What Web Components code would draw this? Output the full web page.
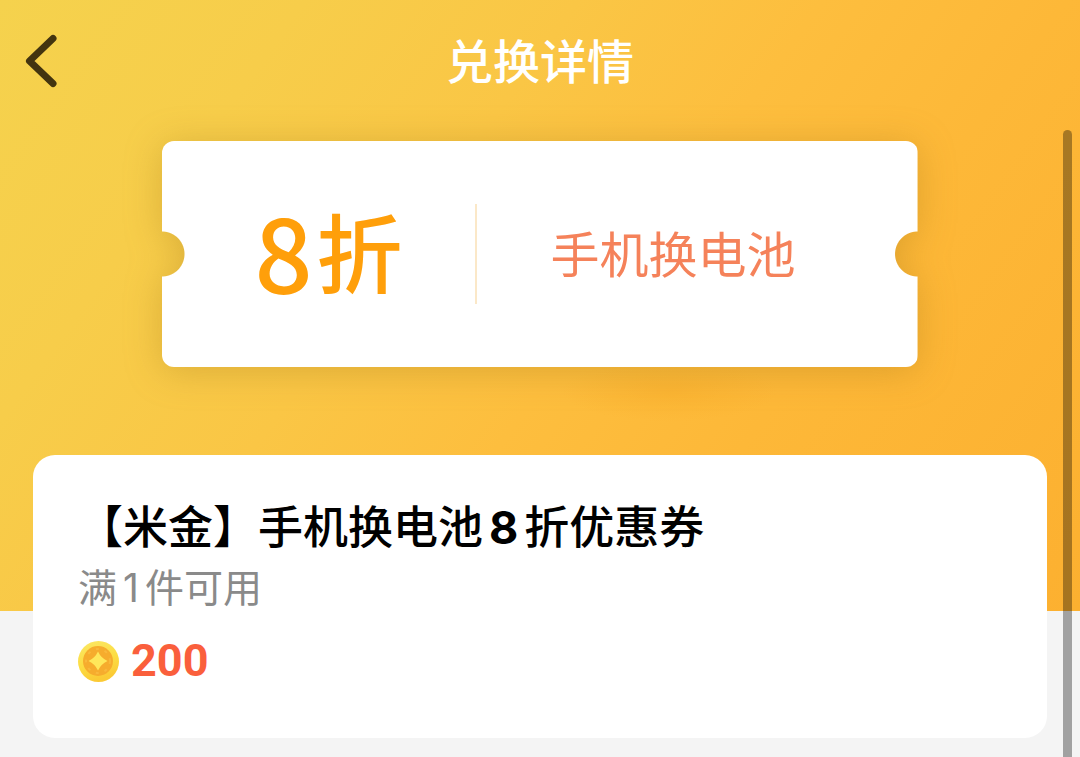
<!DOCTYPE html>
<html lang="zh-CN">
<head>
<meta charset="UTF-8">
<meta name="viewport" content="width=device-width, initial-scale=1">
<title>兑换详情</title>
<style>
    body {
        margin: 0;
        background: #f4f4f4;
        font-family: "Noto Sans CJK SC", sans-serif;
    }
</style>
</head>
<body>
<exchange-page>
    <page-header slot="header">兑换详情</page-header>
    <coupon-ticket slot="ticket" amount="8" unit="折">手机换电池</coupon-ticket>
    <coupon-info price="200">
        <span slot="title">【米金】手机换电池<b>8</b>折优惠券</span>
        <span slot="rule">满<b>1</b>件可用</span>
    </coupon-info>
</exchange-page>

<script>
class ExchangePage extends HTMLElement {
    constructor() {
        super();
        this.attachShadow({ mode: 'open' });
    }

    connectedCallback() {
        this.shadowRoot.innerHTML = `
            <style>
                :host {
                    display: block;
                    position: relative;
                    min-height: 100vh;
                }
                .hero {
                    padding-bottom: 244px;
                    background:
                        radial-gradient(ellipse 10% 5% at 62% 64%, rgba(248, 172, 40, 0.45), transparent),
                        linear-gradient(126deg, #f5d24d 0%, #f7cd4a 20%, #fac645 38%, #fdbe3e 54%, #fdb838 70%, #fcb030 100%);
                }
                main {
                    margin: -156px 33px 0;
                    padding-bottom: 19px;
                }
                .scrollbar {
                    position: absolute;
                    top: 130px;
                    right: 8px;
                    bottom: 0;
                    width: 9px;
                    border-radius: 5px 5px 0 0;
                    background: rgba(0, 0, 0, 0.34);
                }
            </style>
            <div class="hero">
                <slot name="header"></slot>
                <slot name="ticket"></slot>
            </div>
            <main><slot></slot></main>
            <div class="scrollbar"></div>
        `;
    }
}

class PageHeader extends HTMLElement {
    constructor() {
        super();
        this.attachShadow({ mode: 'open' });
    }

    connectedCallback() {
        this.shadowRoot.innerHTML = `
            <style>
                :host {
                    display: block;
                }
                header {
                    display: grid;
                    grid-template-columns: 1fr auto 1fr;
                    align-items: center;
                    height: 122px;
                    padding: 0 20px;
                }
                button {
                    display: flex;
                    justify-self: start;
                    padding: 0;
                    border: 0;
                    background: none;
                    cursor: pointer;
                }
                h1 {
                    margin: 0;
                    padding-bottom: 4px;
                    color: #fff;
                    font-size: 47px;
                    font-weight: 500;
                    line-height: 60px;
                }
            </style>
            <header>
                <button type="button" aria-label="返回">
                    <svg width="44" height="60" viewBox="0 0 44 60" fill="none" stroke="#43340f" stroke-width="7" stroke-linecap="round" stroke-linejoin="round">
                        <path d="M33 7.500L9.500 30L33 52.500"/>
                    </svg>
                </button>
                <h1><slot></slot></h1>
            </header>
        `;
    }
}

class CouponTicket extends HTMLElement {
    constructor() {
        super();
        this.attachShadow({ mode: 'open' });
    }

    connectedCallback() {
        this.shadowRoot.innerHTML = `
            <style>
                :host {
                    display: block;
                    width: 70%;
                    margin: 19px auto 0;
                    filter: drop-shadow(0 4px 18px rgba(150, 110, 20, 0.3));
                }
                /* half circles cut out of both sides */
                .ticket {
                    display: grid;
                    grid-template-columns: 5fr 7fr;
                    align-items: center;
                    height: 226px;
                    border-radius: 12px;
                    background:
                        radial-gradient(circle at 0 50%, transparent 22px, #fff 23px) left / 51% 100% no-repeat,
                        radial-gradient(circle at 100% 50%, transparent 22px, #fff 23px) right / 51% 100% no-repeat;
                }
                .amount {
                    display: flex;
                    box-sizing: border-box;
                    align-items: center;
                    justify-content: center;
                    gap: 4px;
                    height: 100px;
                    padding-bottom: 8px;
                    padding-left: 20px;
                    border-right: 2px solid #fbe8c8;
                    color: #ff9f0a;
                    font-size: 86px;
                    font-weight: 500;
                    line-height: 92px;
                }
                .number {
                    font-size: 102px;
                }
                .name {
                    padding: 0 49px 4px 0;
                    color: #f5825a;
                    font-size: 49px;
                    line-height: 60px;
                    text-align: center;
                }
            </style>
            <div class="ticket">
                <div class="amount">
                    <span class="number">${this.getAttribute('amount')}</span>
                    <span>${this.getAttribute('unit')}</span>
                </div>
                <div class="name"><slot></slot></div>
            </div>
        `;
    }
}

class CouponInfo extends HTMLElement {
    constructor() {
        super();
        this.attachShadow({ mode: 'open' });
    }

    connectedCallback() {
        this.shadowRoot.innerHTML = `
            <style>
                :host {
                    display: block;
                    padding: 40px 45px 52px;
                    border-radius: 22px;
                    background: #fff;
                }
                h2, p {
                    margin: 0;
                    line-height: 60px;
                }
                h2 {
                    color: #000;
                    font-size: 45px;
                    font-weight: 500;
                }
                p {
                    color: #8a8a8a;
                    font-size: 39px;
                    font-weight: 400;
                }
                coin-price {
                    margin-top: 21px;
                }
            </style>
            <h2><slot name="title"></slot></h2>
            <p><slot name="rule"></slot></p>
            <coin-price>${this.getAttribute('price')}</coin-price>
        `;
        // digits inside Chinese text get a latin face and some air
        this.querySelectorAll('b').forEach((digit) => {
            const bold = digit.parentElement.slot === 'title';
            digit.style.fontFamily = 'Inter, sans-serif';
            digit.style.fontWeight = bold ? '700' : '400';
            digit.style.lineHeight = '1';
            digit.style.margin = '0 6px';
        });
    }
}

class CoinPrice extends HTMLElement {
    constructor() {
        super();
        this.attachShadow({ mode: 'open' });
    }

    connectedCallback() {
        this.shadowRoot.innerHTML = `
            <style>
                :host {
                    display: flex;
                    align-items: center;
                    gap: 12px;
                    color: #fa5f3c;
                    font-family: Roboto, sans-serif;
                    font-size: 45px;
                    font-weight: 700;
                    line-height: 50px;
                }
            </style>
            <svg width="41" height="41" viewBox="0 0 41 41" aria-hidden="true">
                <defs>
                    <linearGradient id="rim" x1="0" y1="0" x2="0.300" y2="1">
                        <stop offset="0" stop-color="#fbe866"/>
                        <stop offset="0.600" stop-color="#fcdc42"/>
                        <stop offset="1" stop-color="#fbca35"/>
                    </linearGradient>
                </defs>
                <circle cx="20.500" cy="20.500" r="20.500" fill="url(#rim)"/>
                <circle cx="20" cy="20" r="15" fill="#f6ac2d"/>
                <circle cx="20" cy="20" r="12" fill="none" stroke="#f9b83c" stroke-width="2" stroke-dasharray="3 6"/>
                <path d="M20 10.500Q23 17 29.500 20Q23 23 20 29.500Q17 23 10.500 20Q17 17 20 10.500Z" fill="#ffe75a"/>
            </svg>
            <span><slot></slot></span>
        `;
    }
}

customElements.define('exchange-page', ExchangePage);
customElements.define('page-header', PageHeader);
customElements.define('coupon-ticket', CouponTicket);
customElements.define('coupon-info', CouponInfo);
customElements.define('coin-price', CoinPrice);
</script>
</body>
</html>
